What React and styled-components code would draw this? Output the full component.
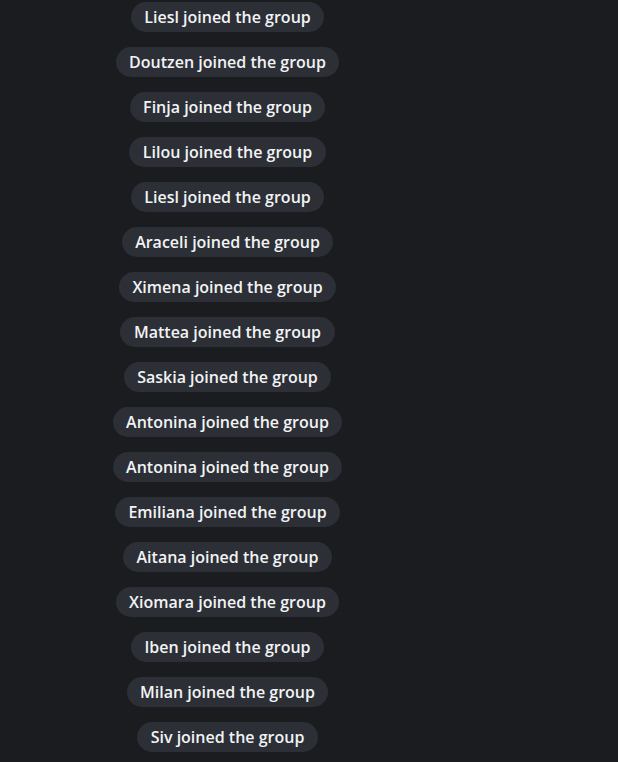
import React from 'react';
import styled, { createGlobalStyle } from 'styled-components';

const GlobalStyle = createGlobalStyle`
  html, body {
    margin: 0;
    padding: 0;
    background: #1b1c20;
  }
`;

const Page = styled.div`
  width: 618px;
  height: 762px;
  overflow: hidden;
  background: #1b1c20;
  display: flex;
`;

const Column = styled.div`
  width: 455px;
  display: flex;
  flex-direction: column;
  align-items: center;
  gap: 15px;
  padding-top: 2px;
`;

const ServicePill = styled.div`
  height: 30px;
  line-height: 30px;
  padding: 0 13.5px;
  border-radius: 15px;
  background: #2c2f35;
  color: #f2f3f5;
  font-family: "Open Sans", "Noto Sans", sans-serif;
  font-weight: 600;
  font-size: 16px;
  white-space: nowrap;
`;

const names = [
  'Liesl', 'Doutzen', 'Finja', 'Lilou', 'Liesl', 'Araceli', 'Ximena', 'Mattea',
  'Saskia', 'Antonina', 'Antonina', 'Emiliana', 'Aitana', 'Xiomara', 'Iben',
  'Milan', 'Siv'
];

export default function App() {
  return (
    <>
      <GlobalStyle />
      <Page>
        <Column>
          {names.map((name, i) => (
            <ServicePill key={i}>{name} joined the group</ServicePill>
          ))}
        </Column>
      </Page>
    </>
  );
}
